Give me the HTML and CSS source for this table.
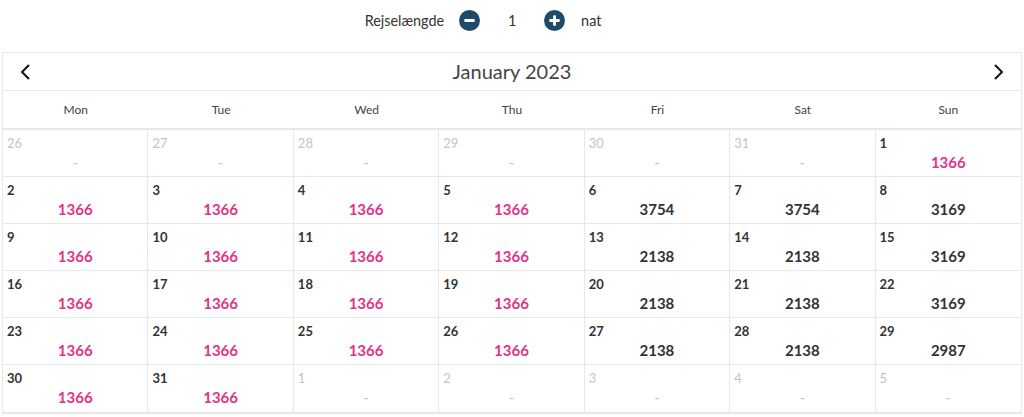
FILE: index.html
```html
<!DOCTYPE html>
<html lang="da">
<head>
<meta charset="utf-8">
<link rel="stylesheet" href="styles.css">
</head>
<body>
<div class="stay">
  <span class="stay-label">Rejselængde</span>
  <button class="round-btn" aria-label="minus"><svg width="21" height="21" viewBox="0 0 20 20"><circle cx="10" cy="10" r="10" fill="#1f4b6b"/><rect x="5" y="8.6" width="10" height="2.8" rx="1" fill="#fff"/></svg></button>
  <span class="stay-value">1</span>
  <button class="round-btn" aria-label="plus"><svg width="21" height="21" viewBox="0 0 20 20"><circle cx="10" cy="10" r="10" fill="#1f4b6b"/><rect x="5" y="8.6" width="10" height="2.8" rx="1" fill="#fff"/><rect x="8.6" y="5" width="2.8" height="10" rx="1" fill="#fff"/></svg></button>
  <span class="stay-unit">nat</span>
</div>
<div class="calendar">
  <div class="cal-head">
    <span class="arrow"><svg width="14" height="18" viewBox="0 0 14 18"><path d="M10 2 L3 9 L10 16" fill="none" stroke="#111" stroke-width="2"/></svg></span>
    <span class="title">January 2023</span>
    <span class="arrow"><svg width="14" height="18" viewBox="0 0 14 18"><path d="M4 2 L11 9 L4 16" fill="none" stroke="#111" stroke-width="2"/></svg></span>
  </div>
  <div class="weekdays">
    <div>Mon</div><div>Tue</div><div>Wed</div><div>Thu</div><div>Fri</div><div>Sat</div><div>Sun</div>
  </div>
  <div class="grid">
    <div class="cell off"><span class="d">26</span><span class="p">-</span></div>
    <div class="cell off"><span class="d">27</span><span class="p">-</span></div>
    <div class="cell off"><span class="d">28</span><span class="p">-</span></div>
    <div class="cell off"><span class="d">29</span><span class="p">-</span></div>
    <div class="cell off"><span class="d">30</span><span class="p">-</span></div>
    <div class="cell off"><span class="d">31</span><span class="p">-</span></div>
    <div class="cell"><span class="d">1</span><span class="p pink">1366</span></div>

    <div class="cell"><span class="d">2</span><span class="p pink">1366</span></div>
    <div class="cell"><span class="d">3</span><span class="p pink">1366</span></div>
    <div class="cell"><span class="d">4</span><span class="p pink">1366</span></div>
    <div class="cell"><span class="d">5</span><span class="p pink">1366</span></div>
    <div class="cell"><span class="d">6</span><span class="p">3754</span></div>
    <div class="cell"><span class="d">7</span><span class="p">3754</span></div>
    <div class="cell"><span class="d">8</span><span class="p">3169</span></div>

    <div class="cell"><span class="d">9</span><span class="p pink">1366</span></div>
    <div class="cell"><span class="d">10</span><span class="p pink">1366</span></div>
    <div class="cell"><span class="d">11</span><span class="p pink">1366</span></div>
    <div class="cell"><span class="d">12</span><span class="p pink">1366</span></div>
    <div class="cell"><span class="d">13</span><span class="p">2138</span></div>
    <div class="cell"><span class="d">14</span><span class="p">2138</span></div>
    <div class="cell"><span class="d">15</span><span class="p">3169</span></div>

    <div class="cell"><span class="d">16</span><span class="p pink">1366</span></div>
    <div class="cell"><span class="d">17</span><span class="p pink">1366</span></div>
    <div class="cell"><span class="d">18</span><span class="p pink">1366</span></div>
    <div class="cell"><span class="d">19</span><span class="p pink">1366</span></div>
    <div class="cell"><span class="d">20</span><span class="p">2138</span></div>
    <div class="cell"><span class="d">21</span><span class="p">2138</span></div>
    <div class="cell"><span class="d">22</span><span class="p">3169</span></div>

    <div class="cell"><span class="d">23</span><span class="p pink">1366</span></div>
    <div class="cell"><span class="d">24</span><span class="p pink">1366</span></div>
    <div class="cell"><span class="d">25</span><span class="p pink">1366</span></div>
    <div class="cell"><span class="d">26</span><span class="p pink">1366</span></div>
    <div class="cell"><span class="d">27</span><span class="p">2138</span></div>
    <div class="cell"><span class="d">28</span><span class="p">2138</span></div>
    <div class="cell"><span class="d">29</span><span class="p">2987</span></div>

    <div class="cell"><span class="d">30</span><span class="p pink">1366</span></div>
    <div class="cell"><span class="d">31</span><span class="p pink">1366</span></div>
    <div class="cell off"><span class="d">1</span><span class="p">-</span></div>
    <div class="cell off"><span class="d">2</span><span class="p">-</span></div>
    <div class="cell off"><span class="d">3</span><span class="p">-</span></div>
    <div class="cell off"><span class="d">4</span><span class="p">-</span></div>
    <div class="cell off"><span class="d">5</span><span class="p">-</span></div>
  </div>
</div>
</body>
</html>
```
FILE: styles.css
```css
* { box-sizing: border-box; }
html, body { margin: 0; padding: 0; background: #fff; }
body {
  font-family: Lato, "Open Sans", sans-serif;
  color: #333;
  padding: 8px 2px 0 2px;
}
.stay {
  display: flex;
  align-items: center;
  justify-content: center;
  height: 24px;
  font-size: 14.4px;
  color: #333;
  padding-right: 58px;
}
.stay-label { margin-right: 15px; }
.round-btn {
  border: 0;
  padding: 0;
  background: none;
  width: 21px;
  height: 21px;
  display: flex;
}
.stay-value { width: 64px; text-align: center; }
.stay-unit { margin-left: 16px; }

.calendar {
  margin-top: 20px;
  border: 1px solid #e8e8e8;
  border-bottom: 2px solid #e6e6e6;
  width: 1020px;
}
.cal-head {
  display: flex;
  align-items: center;
  justify-content: space-between;
  height: 38px;
  padding: 0 16px 0 16px;
  border-bottom: 1px solid #e8e8e8;
}
.arrow { display: flex; width: 14px; }
.title { font-size: 20px; color: #444; position: relative; top: -1px; }
.weekdays {
  display: grid;
  grid-template-columns: repeat(7, 1fr);
  height: 39px;
  border-bottom: 2px solid #e8e8e8;
  align-items: center;
  font-size: 12px;
  color: #444;
  text-align: center;
}
.grid {
  display: grid;
  grid-template-columns: repeat(7, 1fr);
  grid-auto-rows: 47px;
}
.cell {
  display: flex;
  flex-direction: column;
  padding: 5px 4px 0 4px;
  border-right: 1px solid #e8e8e8;
  border-bottom: 1px solid #e8e8e8;
}
.cell:nth-child(7n) { border-right: 0; }
.cell:nth-last-child(-n+7) { border-bottom: 0; }
.d { font-size: 13px; font-weight: 700; color: #333; line-height: 16px; }
.p { font-size: 15px; font-weight: 700; color: #333; text-align: center; line-height: 20px; margin-top: 1px; }
.pink { color: #e0338a; }
.off .d, .off .p { color: #c4c4c4; font-weight: 400; }
```
